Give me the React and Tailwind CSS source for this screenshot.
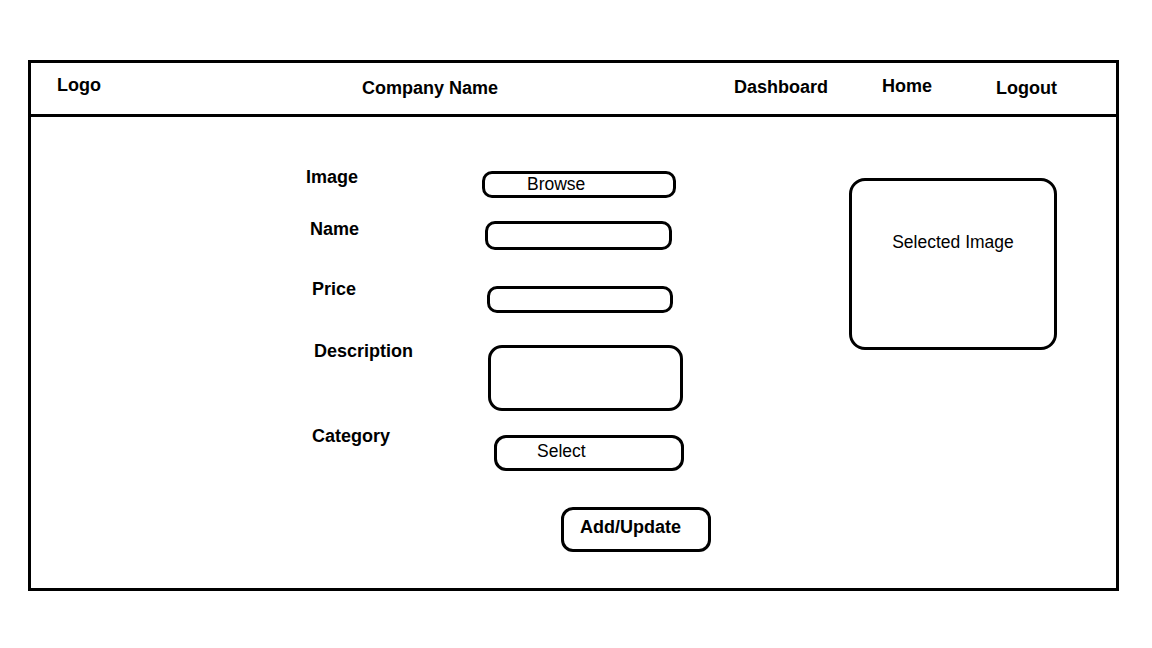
export default function App() {
  return (
    <div className="min-h-screen bg-white pt-[60px] pl-[28px] text-black" style={{ fontFamily: '"Liberation Sans", Arial, sans-serif' }}>
      <div className="w-[1091px] h-[531px] border-[3px] border-black flex flex-col">
        {/* header */}
        <header className="h-[54px] border-b-[3px] border-black flex items-start pt-[12px] pl-[26px] text-[18px] leading-[21px] font-bold">
          <span className="w-[305px]">Logo</span>
          <span className="w-[372px] mt-[3px]">Company Name</span>
          <span className="w-[148px] mt-[2px]">Dashboard</span>
          <span className="w-[114px] mt-[1px]">Home</span>
          <span className="mt-[3px]">Logout</span>
        </header>

        {/* body */}
        <main className="flex pl-[275px]">
          <form className="w-[410px] flex flex-col text-[18px] leading-[21px]">
            <div className="flex items-start mt-[50px]">
              <label className="w-[176px] font-bold">Image</label>
              <button type="button" className="mt-[4px] w-[194px] h-[27px] border-[3px] border-black rounded-[10px] text-left pl-[42px] text-[17.5px] leading-[21px]">
                Browse
              </button>
            </div>

            <div className="flex items-start mt-[21px]">
              <label className="w-[179px] pl-[4px] font-bold">Name</label>
              <input className="mt-[2px] w-[187px] h-[29px] border-[3px] border-black rounded-[10px] outline-none" />
            </div>

            <div className="flex items-start mt-[29px]">
              <label className="w-[181px] pl-[6px] font-bold">Price</label>
              <input className="mt-[7px] w-[186px] h-[27px] border-[3px] border-black rounded-[10px] outline-none" />
            </div>

            <div className="flex items-start mt-[28px]">
              <label className="w-[182px] pl-[8px] font-bold">Description</label>
              <textarea className="mt-[4px] w-[195px] h-[66px] border-[3px] border-black rounded-[14px] resize-none outline-none" />
            </div>

            <div className="flex items-start mt-[15px]">
              <label className="w-[188px] pl-[6px] font-bold">Category</label>
              <div className="mt-[9px] w-[190px] h-[36px] border-[3px] border-black rounded-[12px] pl-[40px] pt-[3px] text-[17.5px] leading-[21px]">
                Select
              </div>
            </div>

            <div className="mt-[36px] pl-[255px]">
              <button type="button" className="w-[150px] h-[45px] border-[3px] border-black rounded-[12px] text-left pl-[16px] pb-[5px] font-bold text-[18px]">
                Add/Update
              </button>
            </div>
          </form>

          <div className="ml-[133px] mt-[61px] w-[208px] h-[172px] border-[3px] border-black rounded-[16px] flex justify-center pt-[51px] text-[17.5px] leading-[21px]">
            Selected Image
          </div>
        </main>
      </div>
    </div>
  );
}
